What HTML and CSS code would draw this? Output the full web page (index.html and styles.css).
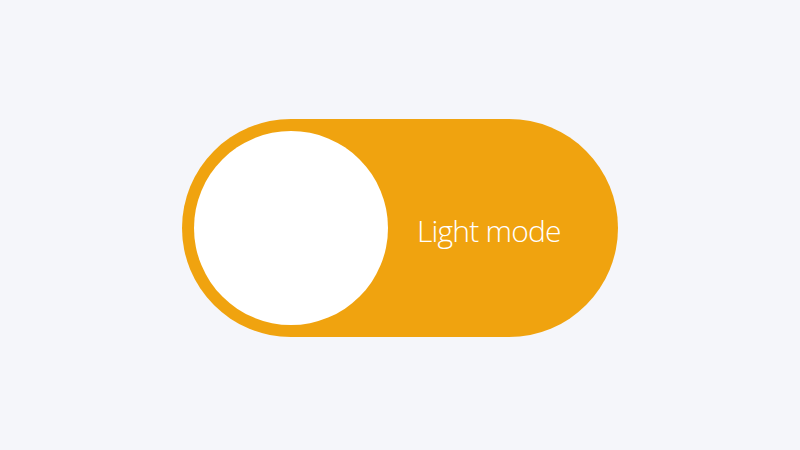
FILE: index.html
```html
<!DOCTYPE html>
<html lang="en">
<head>
    <meta charset="UTF-8">
    <meta name="viewport" content="width=device-width, initial-scale=1.0">
    <link rel="stylesheet" href="styles.css">
    <title>Theme toggle</title>
</head>
<body>

    <button class="toggle" type="button">
        <span class="knob"></span>
        <span class="label">Light mode</span>
    </button>

</body>
</html>
```

FILE: styles.css
```css
html, body {
    margin: 0;
    height: 100%;
}

body {
    background-color: #f5f6fa;
    font-family: 'Open Sans', sans-serif;
    display: flex;
    align-items: center;
    justify-content: center;
}

.toggle {
    display: flex;
    align-items: center;
    gap: 29px;
    width: 436px;
    height: 218px;
    margin-top: 5px;
    padding: 0 12px;
    box-sizing: border-box;
    border: none;
    border-radius: 109px;
    background-color: #f0a30f;
    cursor: pointer;
}

.knob {
    flex: none;
    width: 194px;
    height: 194px;
    border-radius: 50%;
    background-color: #fff;
}

.label {
    color: #fff;
    font-family: 'Open Sans', sans-serif;
    font-weight: 300;
    font-size: 30px;
    letter-spacing: -0.8px;
    white-space: nowrap;
    margin-top: 6px;
}
```
